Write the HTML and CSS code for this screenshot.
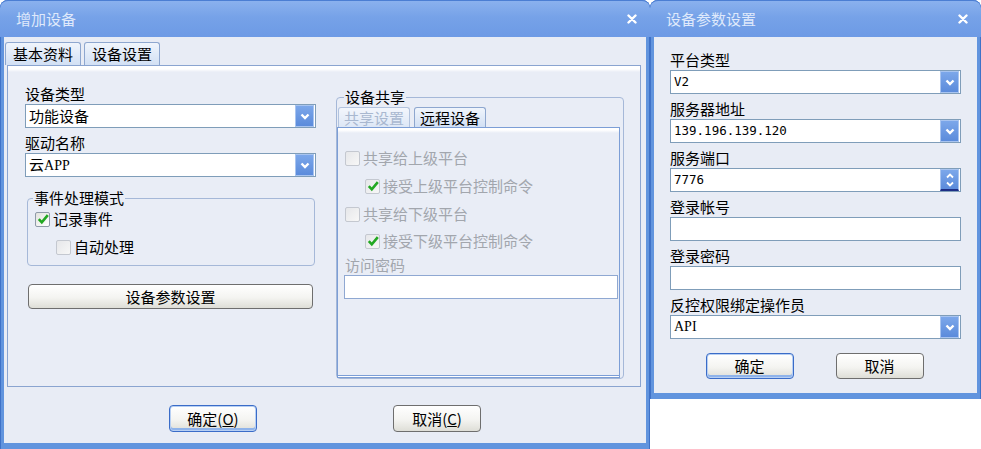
FILE: index.html
```html
<!DOCTYPE html>
<html>
<head>
<meta charset="utf-8">
<title>增加设备</title>
<link rel="stylesheet" href="styles.css">
</head>
<body>
<div class="dlg dlg-main">
  <div class="titlebar">
    <span class="title">增加设备</span>
    <svg class="close" width="10" height="10" viewBox="0 0 10 10"><path d="M1.5 1.5 L8.5 8.5 M8.5 1.5 L1.5 8.5" stroke="#fff" stroke-width="2.4" stroke-linecap="round"/></svg>
  </div>
  <div class="body">
    <div class="tabs">
      <div class="tab">基本资料</div>
      <div class="tab active">设备设置</div>
    </div>
    <div class="panel">
      <div class="col-left">
        <div class="lbl">设备类型</div>
        <div class="select"><span class="val">功能设备</span><span class="drop"><svg width="10" height="7" viewBox="0 0 10 7"><polyline points="1.5,1.5 5,5 8.5,1.5" fill="none" stroke="#fff" stroke-width="2.4"/></svg></span></div>
        <div class="lbl gap">驱动名称</div>
        <div class="select"><span class="val">云<span class="asc serif">APP</span></span><span class="drop"><svg width="10" height="7" viewBox="0 0 10 7"><polyline points="1.5,1.5 5,5 8.5,1.5" fill="none" stroke="#fff" stroke-width="2.4"/></svg></span></div>
        <fieldset class="group grp-event">
          <legend>事件处理模式</legend>
          <div class="cbrow r1"><span class="cb"><svg width="12" height="12" viewBox="0 0 12 12"><path d="M1.8 6.2 L4.8 9.4 L10.8 2.2" fill="none" stroke="#22a822" stroke-width="2.6"/></svg></span>记录事件</div>
          <div class="cbrow r2"><span class="cb dis"></span>自动处理</div>
        </fieldset>
        <div class="btn wide">设备参数设置</div>
      </div>
      <fieldset class="group grp-share">
        <legend>设备共享</legend>
        <div class="itabs">
          <div class="itab dis">共享设置</div>
          <div class="itab active">远程设备</div>
        </div>
        <div class="ipanel">
          <div class="cbrow dtext s1"><span class="cb dis"></span>共享给上级平台</div>
          <div class="cbrow dtext s2"><span class="cb dis"><svg width="12" height="12" viewBox="0 0 12 12"><path d="M1.8 6.2 L4.8 9.4 L10.8 2.2" fill="none" stroke="#22a822" stroke-width="2.6"/></svg></span>接受上级平台控制命令</div>
          <div class="cbrow dtext s3"><span class="cb dis"></span>共享给下级平台</div>
          <div class="cbrow dtext s4"><span class="cb dis"><svg width="12" height="12" viewBox="0 0 12 12"><path d="M1.8 6.2 L4.8 9.4 L10.8 2.2" fill="none" stroke="#22a822" stroke-width="2.6"/></svg></span>接受下级平台控制命令</div>
          <div class="lbl dtext s5">访问密码</div>
          <div class="input pwd"></div>
        </div>
      </fieldset>
    </div>
    <div class="footer">
      <div class="btn default">确定(<u>O</u>)</div>
      <div class="btn">取消(<u>C</u>)</div>
    </div>
  </div>
</div>

<div class="dlg dlg-sub">
  <div class="titlebar">
    <span class="title">设备参数设置</span>
    <svg class="close" width="10" height="10" viewBox="0 0 10 10"><path d="M1.5 1.5 L8.5 8.5 M8.5 1.5 L1.5 8.5" stroke="#fff" stroke-width="2.4" stroke-linecap="round"/></svg>
  </div>
  <div class="body form">
    <div class="lbl">平台类型</div>
    <div class="select row"><span class="val asc">V2</span><span class="drop"><svg width="10" height="7" viewBox="0 0 10 7"><polyline points="1.5,1.5 5,5 8.5,1.5" fill="none" stroke="#fff" stroke-width="2.4"/></svg></span></div>
    <div class="lbl">服务器地址</div>
    <div class="select row"><span class="val asc">139.196.139.120</span><span class="drop"><svg width="10" height="7" viewBox="0 0 10 7"><polyline points="1.5,1.5 5,5 8.5,1.5" fill="none" stroke="#fff" stroke-width="2.4"/></svg></span></div>
    <div class="lbl">服务端口</div>
    <div class="select row"><span class="val asc">7776</span><span class="spin"><svg width="10" height="18" viewBox="0 0 10 18"><polyline points="2,6.5 5,3.5 8,6.5" fill="none" stroke="#fff" stroke-width="1.8"/><polyline points="2,11.5 5,14.5 8,11.5" fill="none" stroke="#fff" stroke-width="1.8"/></svg></span></div>
    <div class="lbl">登录帐号</div>
    <div class="input row"></div>
    <div class="lbl">登录密码</div>
    <div class="input row"></div>
    <div class="lbl">反控权限绑定操作员</div>
    <div class="select row"><span class="val asc serif">API</span><span class="drop"><svg width="10" height="7" viewBox="0 0 10 7"><polyline points="1.5,1.5 5,5 8.5,1.5" fill="none" stroke="#fff" stroke-width="2.4"/></svg></span></div>
    <div class="footer2">
      <div class="btn default small">确定</div>
      <div class="btn small">取消</div>
    </div>
  </div>
</div>
</body>
</html>
```
FILE: styles.css
```css
* { box-sizing: border-box; }
html, body { margin: 0; padding: 0; }
body {
  width: 981px;
  height: 449px;
  overflow: hidden;
  background: #ffffff;
  display: flex;
  align-items: flex-start;
  font-family: "Noto Sans CJK SC", "Noto Sans", sans-serif;
  font-size: 15px;
  color: #000;
}

.dlg {
  display: flex;
  flex-direction: column;
  background: #6194de;
  border-radius: 8px 8px 0 0;
  box-shadow: inset 1px 0 0 #3f72c8, inset -1px 0 0 #3f72c8;
}
.dlg-main { width: 650px; height: 449px; }
.dlg-sub { width: 331px; height: 399px; }

.titlebar {
  height: 37px;
  flex: none;
  display: flex;
  align-items: center;
  justify-content: space-between;
  padding: 0 13px 0 16px;
  background: linear-gradient(#8ab1ee, #76a2e8 45%, #6d9ae5);
  border-radius: 8px 8px 0 0;
  border-top: 1px solid #4b7ed3;
}
.title {
  color: #dfe9fb;
  line-height: 18px;
}
.close { display: block; }

.body {
  flex: 1;
  margin: 0 4px 6px;
  background: #e8ecf5;
}

/* main tabs */
.tabs {
  display: flex;
  gap: 3px;
  padding: 5px 0 0 1px;
  height: 28px;
}
.tab {
  height: 23px;
  padding: 0 7px;
  line-height: 22px;
  border: 1px solid #8ea7cf;
  border-bottom: none;
  border-radius: 3px 3px 0 0;
  background: linear-gradient(#f0f5fc, #d2e0f4);
}

.panel {
  margin-left: 3px;
  width: 634px;
  height: 322px;
  border: 1px solid #8aa4d0;
  background: linear-gradient(#ffffff, #ffffff 3px, #e9edf6 6px);
  padding: 19px 0 0 17px;
  display: flex;
  align-items: flex-start;
  gap: 20px;
}
.col-left { width: 291px; display: flex; flex-direction: column; }

.lbl { height: 18px; line-height: 18px; margin-bottom: 1px; }
.lbl.gap { margin-top: 6px; }

.select, .input {
  height: 24px;
  border: 1px solid #7f9db9;
  background: #fff;
  display: flex;
  align-items: center;
}
.val { padding-left: 3px; line-height: 20px; }
.asc { font-family: "DejaVu Sans Mono", monospace; font-size: 12.5px; }
.serif { font-family: "Liberation Serif", serif; font-size: 14px; }
.drop, .spin {
  margin-left: auto;
  margin-right: 1px;
  width: 19px;
  height: 22px;
  background: linear-gradient(#7ca7ea, #5b8bdb);
  border: 1px solid #a8c4f0;
  display: flex;
  align-items: center;
  justify-content: center;
}
.spin {
  border-bottom: 2px solid #1d2f86;
}

fieldset.group {
  border: 1px solid #a5b8d8;
  border-radius: 4px;
  padding: 0;
  min-width: 0;
}
fieldset.group legend {
  padding: 0 1px;
  line-height: 18px;
}
.grp-event {
  margin: 12px 1px 0 2px;
  padding: 0 0 7px 0 !important;
}
.grp-event legend { margin-left: 5px; }

.cbrow {
  display: flex;
  align-items: center;
  height: 22px;
  gap: 3px;
  line-height: 18px;
}
.cb {
  width: 15px;
  height: 15px;
  flex: none;
  border: 1px solid #8f9aa8;
  border-radius: 2px;
  background: linear-gradient(135deg, #e2e3de, #ffffff);
  display: flex;
  align-items: center;
  justify-content: center;
}
.cb.dis {
  border-color: #c4c8d0;
  background: linear-gradient(135deg, #e6e7ea, #f7f7f7);
}
.r1 { margin-top: 1px; padding-left: 7px; }
.r2 { margin-top: 6px; padding-left: 28px; }

.btn {
  height: 27px;
  width: 88px;
  border: 1px solid #6e6e6e;
  border-radius: 4px;
  background: linear-gradient(#ffffff, #f4f4f1 55%, #deded7);
  display: flex;
  align-items: center;
  justify-content: center;
  line-height: 18px;
}
.btn u { text-decoration: underline; }
.btn.default {
  border-color: #3a6cc8;
  box-shadow: inset 0 0 0 1px #b7cff3, inset 0 -2px 0 1px #8fb3ea;
}
.btn.wide {
  width: 285px;
  height: 25px;
  margin: 18px 0 0 3px;
}

.grp-share {
  width: 288px;
  height: 291px;
  margin: 3px 0 0 0;
}
.grp-share legend { margin-left: 7px; }

.itabs {
  display: flex;
  gap: 4px;
  margin: 1px 0 0 1px;
  height: 20px;
}
.itab {
  height: 20px;
  padding: 0 5px;
  line-height: 19px;
  border: 1px solid #8ea7cf;
  border-bottom: none;
  border-radius: 3px 3px 0 0;
  background: linear-gradient(#f0f5fc, #d2e0f4);
}
.itab.dis {
  color: #a9b8d0;
  background: linear-gradient(#f3f6fc, #dde7f6);
  border-color: #b2c3de;
}

.ipanel {
  width: 283px;
  height: 251px;
  border: 1px solid #7c9ed6;
  border-bottom: 3px double #7c9ed6;
  background: linear-gradient(#ffffff, #ffffff 2px, #e9edf6 5px);
  padding: 19px 0 0 7px;
}
.dtext { color: #a2a6ad; }
.s2 { margin-top: 6px; padding-left: 20px; }
.s3 { margin-top: 6px; }
.s4 { margin-top: 5px; padding-left: 20px; }
.s5 { margin-top: 4px; }
.input.pwd {
  width: 274px;
  margin-left: -1px;
  border-color: #8fa8d2;
}

.footer {
  display: flex;
  justify-content: center;
  gap: 136px;
  margin-top: 18px;
}

/* sub dialog */
.form {
  padding: 14px 16px 0;
  margin-bottom: 6px;
}
.row { margin-bottom: 6px; }
.footer2 {
  display: flex;
  justify-content: center;
  gap: 42px;
  margin-top: 14px;
  padding-right: 2px;
}
.btn.small { height: 26px; }
```
